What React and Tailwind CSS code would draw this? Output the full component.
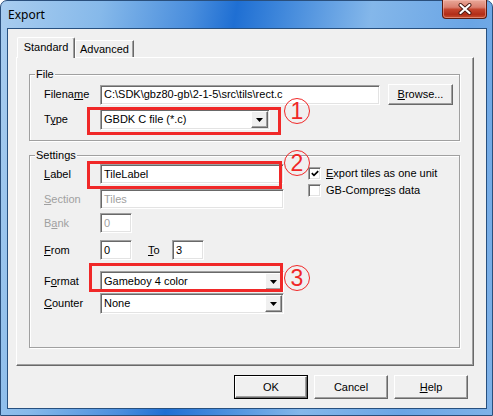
import React from 'react';

// classic 3D edges
const sunken =
  'border border-t-[#a0a0a0] border-l-[#a0a0a0] border-r-white border-b-white shadow-[inset_1px_1px_0_#696969,inset_-1px_-1px_0_#e3e3e3]';
const raised =
  'border border-t-white border-l-white border-r-[#696969] border-b-[#696969] shadow-[inset_-1px_-1px_0_#a0a0a0]';

const U = ({ children }) => <span className="underline underline-offset-[1px]">{children}</span>;

function TextBox({ value, disabled, className = '' }) {
  return (
    <div className={`${sunken} bg-white h-[20px] flex items-center pl-[3px] whitespace-nowrap overflow-hidden ${disabled ? 'text-[#a0a0a0]' : ''} ${className}`}>
      {value}
    </div>
  );
}

function Combo({ value, className = '' }) {
  return (
    <div className={`${sunken} bg-white h-[21px] p-px flex ${className}`}>
      <div className="flex-1 flex items-center pl-[2px] whitespace-nowrap">{value}</div>
      <div className={`${raised} bg-[#f0f0f0] w-[17px] flex items-center justify-center`}>
        <svg width="7" height="4" viewBox="0 0 7 4">
          <path d="M0 0h7L3.5 4z" fill="#000" />
        </svg>
      </div>
    </div>
  );
}

function Check({ checked, children }) {
  return (
    <div className="flex items-center h-[13px]">
      <div className={`${sunken} bg-white w-[13px] h-[13px] flex items-center justify-center`}>
        {checked && (
          <svg width="8" height="7" viewBox="0 0 8 7">
            <path d="M0.8 3.2L3 5.4L7.2 1.2" stroke="#000" strokeWidth="1.7" fill="none" />
          </svg>
        )}
      </div>
      <span className="ml-[5px] whitespace-nowrap">{children}</span>
    </div>
  );
}

function Btn({ children, def, className = '' }) {
  if (def) {
    return (
      <div className={`border border-black ${className}`}>
        <div className={`${raised} h-full bg-[#f0f0f0] flex items-center justify-center`}>{children}</div>
      </div>
    );
  }
  return (
    <div className={`${raised} bg-[#f0f0f0] flex items-center justify-center ${className}`}>{children}</div>
  );
}

function Row({ label, disabled, className = '', children }) {
  return (
    <div className={`flex items-center ${className}`}>
      <div className={`w-[56px] whitespace-nowrap ${disabled ? 'text-[#a0a0a0]' : ''}`}>{label}</div>
      {children}
    </div>
  );
}

function Group({ title, className = '', children }) {
  return (
    <div className={`relative border border-[#a0a0a0] shadow-[1px_1px_0_#fff,inset_1px_1px_0_#fff] ${className}`}>
      <div className="absolute -top-[7px] left-[5px] px-px bg-[#f0f0f0] leading-[13px]">{title}</div>
      {children}
    </div>
  );
}

function Circled({ n, className = '' }) {
  return (
    <div className={`absolute w-[26px] h-[26px] rounded-full border-[1.5px] border-[#f02828] text-[#f02828] flex items-center justify-center text-[23px] leading-none ${className}`}>
      {n}
    </div>
  );
}

export default function App() {
  return (
    <div className="relative w-[493px] h-[416px] bg-white font-['Liberation_Sans',Arial,sans-serif] text-[11px] text-black">
      <div className="w-full h-full rounded-t-[7px] border border-[#2a4f7c] bg-[linear-gradient(100deg,#a9cdef_0%,#86b9ea_18%,#4a8edd_34%,#1f6fd3_42%,#3f87db_50%,#84b7ea_66%,#6aa5e5_84%,#7fb2e8_100%)] flex flex-col">
        {/* title bar */}
        <div className="h-[27px] flex items-center pl-[7px] font-['Noto_Sans',sans-serif] text-[12px]">Export</div>

        {/* client area */}
        <div className="ml-[6px] w-[480px] h-[381px] border border-[#27507f] bg-[#f0f0f0] flex flex-col">
          {/* tabs */}
          <div className="ml-[9px] mt-[8px] h-[20px] flex items-end">
            <div className="relative z-10 h-[21px] -mb-px w-[58px] bg-[#f0f0f0] rounded-t-[2px] border-t border-l border-r border-t-white border-l-white border-r-[#696969] shadow-[inset_-1px_0_0_#a0a0a0] flex items-center justify-center pb-px">
              Standard
            </div>
            <div className="h-[17px] w-[59px] border-t border-l border-r border-t-white border-l-white border-r-[#696969] shadow-[inset_-1px_0_0_#a0a0a0] flex items-center justify-center">
              Advanced
            </div>
          </div>

          {/* tab page */}
          <div className={`ml-[8px] w-[458px] h-[309px] ${raised} pl-[12px] pt-[16px]`}>
            <Group title="File" className="w-[431px] h-[67px]">
              <div className="pt-[9px] pl-[14px]">
                <Row label={<>Filena<U>m</U>e</>}>
                  <TextBox value={'C:\\SDK\\gbz80-gb\\2-1-5\\src\\tils\\rect.c'} className="w-[280px]" />
                  <Btn className="ml-[8px] w-[65px] h-[21px]"><U>B</U>rowse...</Btn>
                </Row>
                <Row label={<>T<U>y</U>pe</>} className="mt-[4px]">
                  <Combo value="GBDK C file (*.c)" className="w-[170px]" />
                </Row>
              </div>
            </Group>

            <Group title="Settings" className="mt-[14px] w-[431px] h-[193px]">
              <div className="pt-[8px] pl-[14px]">
                <div className="flex">
                  <div className="flex flex-col">
                    <Row label={<><U>L</U>abel</>}>
                      <TextBox value="TileLabel" className="w-[184px]" />
                    </Row>
                    <Row label={<><U>S</U>ection</>} disabled className="mt-[5px]">
                      <TextBox value="Tiles" disabled className="w-[184px]" />
                    </Row>
                  </div>
                  <div className="ml-[24px] pt-[3px] flex flex-col gap-[4px]">
                    <Check checked><U>E</U>xport tiles as one unit</Check>
                    <Check>GB-Compre<U>s</U>s data</Check>
                  </div>
                </div>
                <Row label={<>B<U>a</U>nk</>} disabled className="mt-[4px]">
                  <TextBox value="0" disabled className="w-[32px]" />
                </Row>
                <Row label={<><U>F</U>rom</>} className="mt-[7px]">
                  <TextBox value="0" className="w-[32px]" />
                  <div className="ml-[16px] w-[24px]"><U>T</U>o</div>
                  <TextBox value="3" className="w-[32px]" />
                </Row>
                <Row label={<>F<U>o</U>rmat</>} className="mt-[11px]">
                  <Combo value="Gameboy 4 color" className="w-[184px]" />
                </Row>
                <Row label={<><U>C</U>ounter</>} className="mt-[1px]">
                  <Combo value="None" className="w-[184px]" />
                </Row>
              </div>
            </Group>
          </div>

          {/* dialog buttons */}
          <div className="mt-[9px] pr-[18px] flex justify-end gap-[6px]">
            <Btn def className="w-[74px] h-[24px]">OK</Btn>
            <Btn className="w-[74px] h-[24px]">Cancel</Btn>
            <Btn className="w-[74px] h-[24px]"><U>H</U>elp</Btn>
          </div>
        </div>
      </div>

      {/* close button */}
      <div className="absolute top-0 left-[442px] w-[45px] h-[19px] rounded-b-[4px] border border-t-0 border-[#5b1c12] bg-[linear-gradient(180deg,#e9a898_0%,#db8070_40%,#c5452e_52%,#b22d18_80%,#c8502f_100%)] shadow-[inset_0_0_0_1px_rgba(255,200,190,0.45)] flex items-center justify-center">
        <svg width="14" height="12" viewBox="0 0 14 12">
          <path d="M2.5 2L11.5 10M11.5 2L2.5 10" stroke="#4a1a12" strokeWidth="4" strokeLinecap="round" />
          <path d="M2.5 2L11.5 10M11.5 2L2.5 10" stroke="#fff" strokeWidth="2.2" strokeLinecap="round" />
        </svg>
      </div>

      {/* red annotations */}
      <div className="absolute left-[87px] top-[107px] w-[194px] h-[28px] border-[3px] border-[#f02828]" />
      <div className="absolute left-[87px] top-[161px] w-[195px] h-[28px] border-[3px] border-[#f02828]" />
      <div className="absolute left-[89px] top-[263px] w-[194px] h-[29px] border-[3px] border-[#f02828]" />
      <Circled n="1" className="left-[284px] top-[98px]" />
      <Circled n="2" className="left-[284px] top-[150px]" />
      <Circled n="3" className="left-[284px] top-[265px]" />
    </div>
  );
}
